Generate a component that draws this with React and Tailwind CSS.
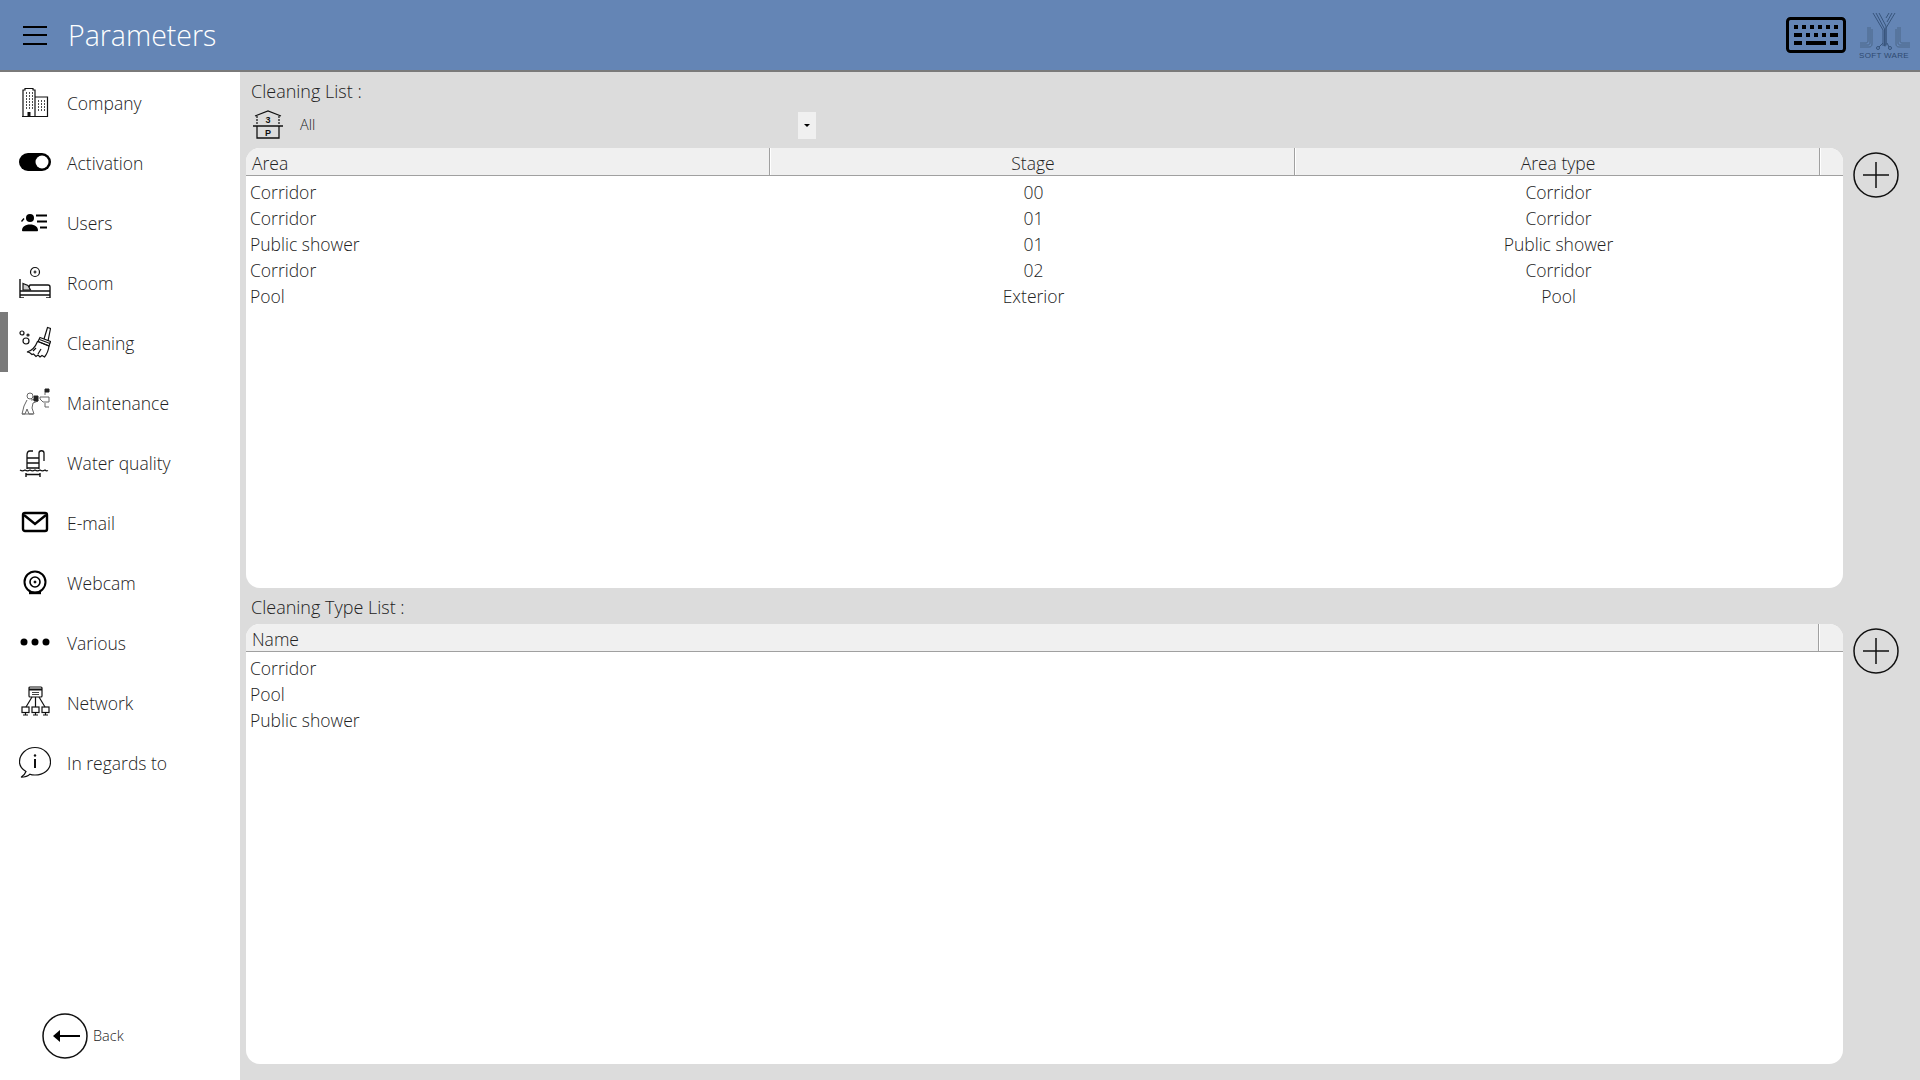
import React from 'react';

const stroke = { fill: 'none', stroke: '#111', strokeWidth: 1.2 };

const CompanyIcon = () => (
  <g {...stroke}>
    <path d="M4 30.500V4h2V2.500h8V4h2v26.500zM16 30.500V11h12.500v19.500zM3 30.500h26" />
    <path d="M8.500 26h3v4.500h-3z" fill="#111" stroke="none" />
    <path d="M7 7h1M10 7h1M13 7h1M7 10h1M10 10h1M13 10h1M7 13h1M10 13h1M13 13h1M7 16h1M10 16h1M13 16h1M7 19h1M10 19h1M13 19h1M7 22h1M10 22h1M13 22h1M19 15h1M22 15h1M25 15h1M19 18h1M22 18h1M25 18h1M19 21h1M22 21h1M25 21h1M19 24h1M22 24h1M25 24h1" strokeWidth="1.400" />
  </g>
);

const ToggleIcon = () => (
  <g>
    <rect x="0" y="7" width="32" height="18" rx="9" fill="#000" />
    <circle cx="23" cy="16" r="6.500" fill="#fff" />
  </g>
);

const UsersIcon = () => (
  <g fill="#000">
    <circle cx="11" cy="12" r="4" />
    <path d="M3 24.500c0-3.500 3-6 8-6s8 2.500 8 6c0 .5-.5.8-1 .8H4c-.5 0-1-.3-1-.8z" />
    <path d="M2 15l2.500-3 1 1-2.500 3zM17 8.500h11v2H17zM18 14.500h10v2H18zM21 20.500h7v2h-7z" />
  </g>
);

const RoomIcon = () => (
  <g {...stroke}>
    <circle cx="16" cy="6" r="4.500" />
    <path d="M14.500 6h3M16 4.500v3" />
    <path d="M1 32V13M1 25h30M31 32V21c0-1-.5-2-2-2H11l-1 2M1 29h30M5 32H1M31 32h-4" strokeWidth="1.400" />
    <path d="M4 17.500l5 2 2.500 4.500H4z" fill="#ccc" />
  </g>
);

const BroomIcon = () => (
  <g {...stroke}>
    <circle cx="3" cy="7" r="2" />
    <circle cx="9" cy="9" r="1" />
    <circle cx="7" cy="15" r="3" />
    <path d="M25 13l3.500-11.500 3 1L29 15" />
    <path d="M21 11.500l10.500 4-1.500 4.500-11-4.500z" />
    <path d="M20.500 13.500l10.500 4" />
    <path d="M19 15.500l11 4.500c-.5 4-2 8-4.500 11l-2.500-1.500-2 1.500-2-2-2 1.500-2.500-2.500-1.500.5-2.500-2-2.500-.5c4-1 8-4 10.500-10.500z" />
    <path d="M14 25l3-3M19 28l3-5" />
  </g>
);

const MaintenanceIcon = () => (
  <g fill="none" stroke="#666" strokeWidth="1">
    <circle cx="11" cy="10" r="3" />
    <path d="M8 14l-3 6-2 8h3l2-5 2 5h5l-2-6 1-5 5-2-1-2-6 1" />
    <path d="M3 28h11M21 11h9v5h-6l-3-3zM26 17v4h4M26 9v-3" />
    <path d="M15 10h4v5h-4zM26 3h4v3h-4z" fill="#222" stroke="#222" />
  </g>
);

const PoolIcon = () => (
  <g {...stroke}>
    <path d="M8 23V9c0-3 1-4 3-4h3M20 23V7c0-3 5-3 5 0v8" strokeWidth="1.300" />
    <path d="M8 12h12M8 17h12M8 22h12" strokeWidth="1.300" />
    <path d="M1 24c2 1.500 3 1.500 5 0 2 1.500 3 1.500 5 0 2 1.500 3 1.500 5 0 2 1.500 3 1.500 5 0 2 1.500 3 1.500 5 0 1 1 2 1 3 .5" />
    <path d="M7 27v4M21 27v4M7 28.500h14" strokeWidth="1.400" />
  </g>
);

const MailIcon = () => (
  <g>
    <rect x="4" y="7" width="24" height="18" rx="2" fill="none" stroke="#000" strokeWidth="2.400" />
    <path d="M5 9l11 9 11-9" fill="none" stroke="#000" strokeWidth="2.400" />
  </g>
);

const WebcamIcon = () => (
  <g fill="none" stroke="#000">
    <circle cx="16" cy="16" r="10.500" strokeWidth="2" />
    <circle cx="16" cy="16" r="5" strokeWidth="1.600" />
    <circle cx="16" cy="16" r="1" fill="#000" />
    <path d="M10 27h12" strokeWidth="2.400" />
  </g>
);

const DotsIcon = () => (
  <g fill="#000">
    <circle cx="5" cy="16" r="3.500" />
    <circle cx="16" cy="16" r="3.500" />
    <circle cx="27" cy="16" r="3.500" />
  </g>
);

const NetworkIcon = () => (
  <g {...stroke}>
    <rect x="10" y="1" width="13" height="10" rx="1" />
    <path d="M10 3.500h13" strokeWidth="2" />
    <path d="M13 6.500h7M13 8.500h7" strokeWidth="0.800" />
    <path d="M13 11l-6 10M16.500 11v10M20 11l6 10" />
    <rect x="3" y="21" width="7" height="5.500" />
    <rect x="13" y="21" width="7" height="5.500" />
    <rect x="23" y="21" width="7" height="5.500" />
    <path d="M4 29h5M6.500 26.500V29M14 29h5M16.500 26.500V29M24 29h5M26.500 26.500V29" />
  </g>
);

const InfoIcon = () => (
  <g fill="none" stroke="#111" strokeWidth="1.200">
    <path d="M7 25.500C3 23 .5 20 .5 16 .5 8 7.500 1.500 16 1.500S31.500 8 31.500 16 24.500 29 16 29c-2 0-4-.3-5-.8-2 2-6 3-9 3 2-1 4-3 5-5.700z" />
    <path d="M16 13v9" strokeWidth="2" />
    <circle cx="16" cy="9.500" r="1.200" fill="#111" stroke="none" />
  </g>
);

const menuItems = [
  { label: 'Company', icon: <CompanyIcon /> },
  { label: 'Activation', icon: <ToggleIcon /> },
  { label: 'Users', icon: <UsersIcon /> },
  { label: 'Room', icon: <RoomIcon /> },
  { label: 'Cleaning', icon: <BroomIcon />, active: true },
  { label: 'Maintenance', icon: <MaintenanceIcon /> },
  { label: 'Water quality', icon: <PoolIcon /> },
  { label: 'E-mail', icon: <MailIcon /> },
  { label: 'Webcam', icon: <WebcamIcon /> },
  { label: 'Various', icon: <DotsIcon /> },
  { label: 'Network', icon: <NetworkIcon /> },
  { label: 'In regards to', icon: <InfoIcon /> },
];

const areas = [
  ['Corridor', '00', 'Corridor'],
  ['Corridor', '01', 'Corridor'],
  ['Public shower', '01', 'Public shower'],
  ['Corridor', '02', 'Corridor'],
  ['Pool', 'Exterior', 'Pool'],
];

const types = ['Corridor', 'Pool', 'Public shower'];

function PlusButton() {
  return (
    <svg width="46" height="46" viewBox="0 0 46 46" className="ml-[10px] mt-[4px] shrink-0">
      <circle cx="23" cy="23" r="22" fill="none" stroke="#111" strokeWidth="1.500" />
      <path d="M10 23h26M23 10v26" fill="none" stroke="#111" strokeWidth="1.500" />
    </svg>
  );
}

function FloorIcon() {
  return (
    <svg width="30" height="30" viewBox="0 0 30 30" className="shrink-0">
      <path d="M2 6l13-5 13 5" fill="none" stroke="#111" strokeWidth="1.300" />
      <path d="M4 6v8M26 6v8" fill="none" stroke="#111" strokeWidth="1.200" strokeDasharray="2 1" />
      <text x="15" y="13" textAnchor="middle" fontSize="9" fontWeight="700" fontFamily="Liberation Sans, sans-serif" fill="#111">3</text>
      <path d="M0 16h30M4 16v12h22V16" fill="none" stroke="#111" strokeWidth="1.300" />
      <text x="15" y="26" textAnchor="middle" fontSize="9" fontWeight="700" fontFamily="Liberation Sans, sans-serif" fill="#111">P</text>
    </svg>
  );
}

function KeyboardIcon() {
  return (
    <svg width="60" height="36" viewBox="0 0 60 36" className="shrink-0">
      <rect x="1.500" y="1.500" width="57" height="33" rx="3" fill="none" stroke="#000" strokeWidth="3" />
      <g fill="#000">
        <rect x="8" y="8" width="4" height="4" />
        <rect x="16" y="8" width="4" height="4" />
        <rect x="24" y="8" width="4" height="4" />
        <rect x="32" y="8" width="4" height="4" />
        <rect x="40" y="8" width="4" height="4" />
        <rect x="48" y="8" width="4" height="4" />
        <rect x="8" y="16" width="8" height="4" />
        <rect x="20" y="16" width="4" height="4" />
        <rect x="28" y="16" width="4" height="4" />
        <rect x="36" y="16" width="4" height="4" />
        <rect x="44" y="16" width="8" height="4" />
        <rect x="8" y="24" width="8" height="4" />
        <rect x="20" y="24" width="20" height="4" />
        <rect x="44" y="24" width="8" height="4" />
      </g>
    </svg>
  );
}

function Logo() {
  return (
    <div className="w-[54px] flex flex-col items-center">
      <svg width="54" height="38" viewBox="0 0 54 38" className="shrink-0">
        <g fill="none" stroke="#38557c" strokeWidth="1">
          <path d="M16 0l10 17v16M19 0l8.500 16v17M22 0l7 13v18M38 0L29 15v17M35 0l-5 9M32 0l-3 5" />
          <path d="M26 30l-4 4M30 30l2 4" />
          <circle cx="21" cy="35" r="1.500" />
          <circle cx="33" cy="35" r="1.500" />
          <circle cx="28" cy="32" r="1" />
        </g>
        <g fill="none" stroke="#4a6688" strokeWidth="1">
          <path d="M15 16v15c0 2-1 3-3 3H3M13 14v16c0 1-1 2-2 2H3M11 14v14c0 1-1 2-2 2H3" />
          <path d="M39 16v15c0 2 1 3 3 3h11M41 14v16c0 1 1 2 2 2h10M43 14v14c0 1 1 2 2 2h8" />
        </g>
      </svg>
      <span className="mt-[1px] text-[8px] leading-[8px] tracking-[0.3px] text-[#2f4a70] font-['Liberation_Sans',sans-serif] whitespace-nowrap">SOFT WARE</span>
    </div>
  );
}

function HeaderCell({ children, center }) {
  return (
    <div className={`border-r border-[#a0a0a0] ${center ? 'text-center pl-[2px]' : 'pl-[6px]'} shadow-[1px_0_0_#fff]`}>
      {children}
    </div>
  );
}

function TableHeader({ columns }) {
  return (
    <div className={`${columns.length > 1 ? 'grid-cols-[524px_525px_525px_1fr]' : 'grid-cols-[1573px_1fr]'} grid h-[28px] overflow-hidden leading-[31px] bg-[#f0f0f0] border-b border-[#a0a0a0]`}>
      {columns.map((c, i) => (
        <HeaderCell key={c} center={i > 0}>{c}</HeaderCell>
      ))}
      <div />
    </div>
  );
}

export default function App() {
  return (
    <div className="w-[1920px] h-[1080px] flex flex-col overflow-hidden bg-[#dcdcdc] text-[#222] text-[17.500px] font-light font-['Open_Sans',sans-serif]">
      <header className="h-[72px] shrink-0 bg-[#6485b5] border-b-2 border-[#7a7a7a] flex items-center pl-[23px] pr-[9px]">
        <div className="w-[24px] flex flex-col gap-[6.500px]">
          <div className="h-[2px] bg-black" />
          <div className="h-[2px] bg-black" />
          <div className="h-[2px] bg-black" />
        </div>
        <h1 className="ml-[21px] text-[28.500px] font-light text-white flex-1">Parameters</h1>
        <KeyboardIcon />
        <div className="ml-[11px] mt-[3px]"><Logo /></div>
      </header>

      <div className="flex-1 flex min-h-0">
        <aside className="w-[240px] shrink-0 bg-white flex flex-col">
          {menuItems.map(item => (
            <div key={item.label} className={`h-[60px] flex items-center ${item.active ? 'border-l-8 border-[#7a7a7a] pl-[11px]' : 'pl-[19px]'}`}>
              <svg width="32" height="32" viewBox="0 0 32 32" className="shrink-0">{item.icon}</svg>
              <span className="ml-[16px] pt-[2px]">{item.label}</span>
            </div>
          ))}
          <div className="mt-auto mb-[21px] ml-[42px] flex items-center">
            <svg width="46" height="46" viewBox="0 0 46 46" className="shrink-0">
              <circle cx="23" cy="23" r="22" fill="none" stroke="#111" strokeWidth="1.500" />
              <path d="M14 23h24" fill="none" stroke="#000" strokeWidth="2" />
              <path d="M11 23l7-6v12z" fill="#000" />
            </svg>
            <span className="ml-[5px] text-[14.500px]">Back</span>
          </div>
        </aside>

        <main className="flex-1 pl-[6px] min-w-0">
          <div className="h-[38px] pl-[5px] flex items-center text-[18px]">Cleaning List :</div>
          <div className="h-[30px] mb-[8px] flex items-center pl-[7px]">
            <FloorIcon />
            <span className="ml-[17px] text-[14.500px] flex-1 max-w-[498px]">All</span>
            <div className="w-[18px] h-[27px] bg-[#f0f0f0] flex items-center justify-center">
              <div className="w-0 h-0 border-x-[3px] border-x-transparent border-t-[3px] border-t-black" />
            </div>
          </div>
          <div className="flex items-start h-[440px]">
            <div className="w-[1597px] h-full bg-white rounded-[14px] overflow-hidden">
              <TableHeader columns={['Area', 'Stage', 'Area type']} />
              <div className="pt-[3px]">
                {areas.map((row, i) => (
                  <div key={i} className="grid grid-cols-[525px_525px_525px] h-[26px] leading-[26px]">
                    <div className="pl-[4px]">{row[0]}</div>
                    <div className="text-center">{row[1]}</div>
                    <div className="text-center">{row[2]}</div>
                  </div>
                ))}
              </div>
            </div>
            <PlusButton />
          </div>

          <div className="h-[36px] pl-[5px] pt-[2px] flex items-center text-[18px]">Cleaning Type List :</div>
          <div className="flex items-start h-[440px]">
            <div className="w-[1597px] h-full bg-white rounded-[14px] overflow-hidden">
              <TableHeader columns={['Name']} />
              <div className="pt-[3px]">
                {types.map(t => (
                  <div key={t} className="h-[26px] leading-[26px] pl-[4px]">{t}</div>
                ))}
              </div>
            </div>
            <PlusButton />
          </div>
        </main>
      </div>
    </div>
  );
}
